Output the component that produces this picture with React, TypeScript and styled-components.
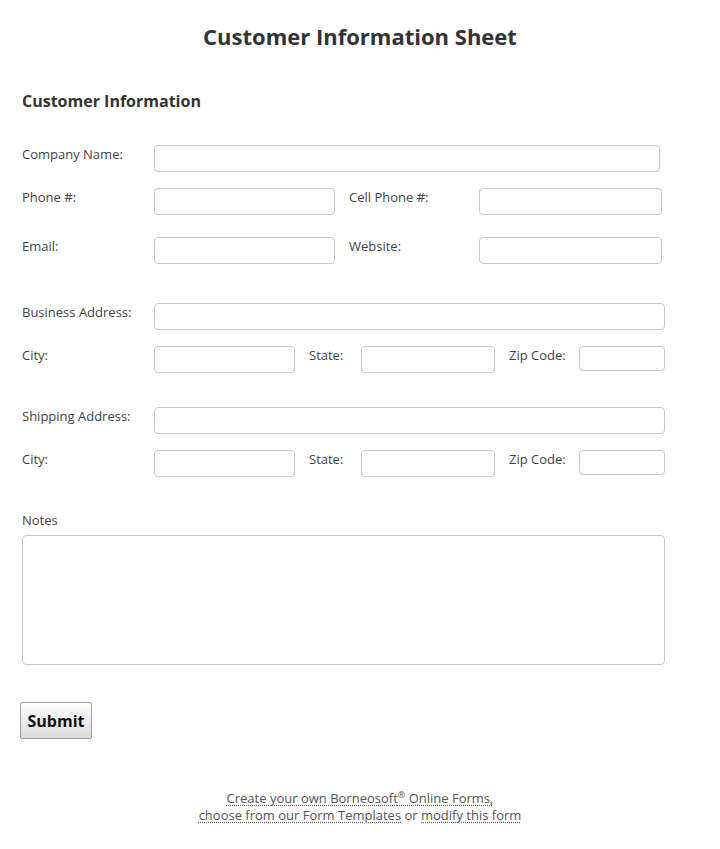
import React from "react";
import styled, { createGlobalStyle } from "styled-components";

const GlobalStyle = createGlobalStyle`
  html, body { margin: 0; padding: 0; background: #fff; }
  body { font-family: "Open Sans", "Liberation Sans", Arial, sans-serif; color: #444; }
  * { box-sizing: border-box; }
`;

const Page = styled.div`
  width: 720px;
  padding: 21px 0 30px 22px;
`;

const Title = styled.h1`
  margin: 0;
  width: 676px;
  font-size: 22px;
  line-height: 30px;
  font-weight: 700;
  color: #333;
  text-align: center;
`;

const Section = styled.h2`
  margin: 39px 0 33px;
  font-size: 16px;
  line-height: 22px;
  font-weight: 700;
  color: #333;
`;

const Row = styled.div<{ $cols: string; $mt: number }>`
  display: grid;
  grid-template-columns: ${(p) => p.$cols};
  align-items: start;
  margin-top: ${(p) => p.$mt}px;
`;

const Label = styled.label<{ $indent?: number }>`
  font-size: 13px;
  line-height: 18px;
  color: #444;
  padding-left: ${(p) => p.$indent ?? 0}px;
`;

const Input = styled.input<{ $h?: number }>`
  display: block;
  width: 100%;
  height: ${(p) => p.$h ?? 27}px;
  border: 1px solid #c8c8c8;
  border-radius: 4px;
  background: #fff;
  font: inherit;
  font-size: 13px;
  padding: 0 6px;
  outline: none;
`;

const NotesLabel = styled.div`
  margin-top: 34px;
  font-size: 13px;
  line-height: 18px;
  color: #444;
`;

const Notes = styled.textarea`
  display: block;
  margin-top: 6px;
  width: 643px;
  height: 130px;
  border: 1px solid #c8c8c8;
  border-radius: 4px;
  resize: none;
  font: inherit;
  outline: none;
`;

const Submit = styled.button`
  display: block;
  margin: 37px 0 0 -2px;
  width: 72px;
  height: 37px;
  padding: 0;
  border: 1px solid #a0a0a0;
  border-radius: 2px;
  background: linear-gradient(#fdfdfd, #dcdcdc);
  font-family: "Open Sans", "Liberation Sans", Arial, sans-serif;
  font-size: 16px;
  font-weight: 700;
  color: #111;
`;

const Footer = styled.div`
  margin-top: 51px;
  width: 676px;
  text-align: center;
  font-size: 13px;
  line-height: 17px;
  color: #555;
`;

const FootLink = styled.a`
  color: #555;
  text-decoration: underline dotted #666;
  text-underline-offset: 2px;
`;

const Sup = styled.sup`
  font-size: 9px;
  line-height: 0;
`;

export default function App() {
  return (
    <>
      <GlobalStyle />
      <Page>
        <Title>Customer Information Sheet</Title>
        <Section>Customer Information</Section>

        <Row $cols="132px 506px" $mt={0}>
          <Label>Company Name:</Label>
          <Input />
        </Row>
        <Row $cols="132px 181px 144px 183px" $mt={16}>
          <Label>Phone #:</Label>
          <Input />
          <Label $indent={14}>Cell Phone #:</Label>
          <Input />
        </Row>
        <Row $cols="132px 181px 144px 183px" $mt={22}>
          <Label>Email:</Label>
          <Input />
          <Label $indent={14}>Website:</Label>
          <Input />
        </Row>

        <Row $cols="132px 511px" $mt={39}>
          <Label>Business Address:</Label>
          <Input />
        </Row>
        <Row $cols="132px 141px 66px 134px 84px 86px" $mt={16}>
          <Label>City:</Label>
          <Input />
          <Label $indent={14}>State:</Label>
          <Input />
          <Label $indent={14}>Zip Code:</Label>
          <Input $h={25} />
        </Row>

        <Row $cols="132px 511px" $mt={34}>
          <Label>Shipping Address:</Label>
          <Input />
        </Row>
        <Row $cols="132px 141px 66px 134px 84px 86px" $mt={16}>
          <Label>City:</Label>
          <Input />
          <Label $indent={14}>State:</Label>
          <Input />
          <Label $indent={14}>Zip Code:</Label>
          <Input $h={25} />
        </Row>

        <NotesLabel>Notes</NotesLabel>
        <Notes />

        <Submit type="button">Submit</Submit>

        <Footer>
          <FootLink href="#">
            Create your own Borneosoft<Sup>®</Sup> Online Forms,
          </FootLink>
          <br />
          <FootLink href="#">choose from our Form Templates</FootLink> or{" "}
          <FootLink href="#">modify this form</FootLink>
        </Footer>
      </Page>
    </>
  );
}
